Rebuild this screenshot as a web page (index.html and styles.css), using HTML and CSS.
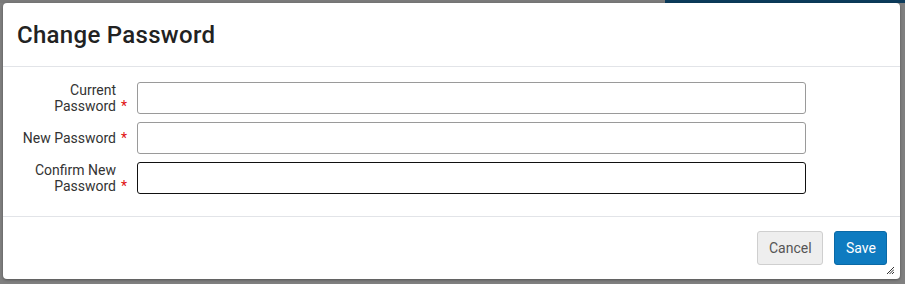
FILE: index.html
```html
<!DOCTYPE html>
<html>
<head>
<meta charset="utf-8">
<link rel="stylesheet" href="styles.css">
</head>
<body>
<div class="pagebar">
  <div class="pagebar-left"></div>
  <div class="pagebar-right"></div>
</div>
<div class="modal">
  <div class="modal-header">
    <h1 class="modal-title">Change Password</h1>
  </div>
  <div class="modal-body">
    <div class="form-row">
      <label class="form-label"><span class="label-text">Current Password</span><span class="req">*</span></label>
      <input class="form-input" type="password">
    </div>
    <div class="form-row">
      <label class="form-label"><span class="label-text">New Password</span><span class="req">*</span></label>
      <input class="form-input" type="password">
    </div>
    <div class="form-row">
      <label class="form-label"><span class="label-text">Confirm New Password</span><span class="req">*</span></label>
      <input class="form-input focused" type="password">
    </div>
  </div>
  <div class="modal-footer">
    <button class="btn btn-cancel">Cancel</button>
    <button class="btn btn-save">Save</button>
    <svg class="resize" width="7" height="7" viewBox="0 0 7 7"><path d="M0 7L7 0M2.5 7L7 2.5M5 7L7 5" stroke="#333" stroke-width="1"/></svg>
  </div>
</div>
</body>
</html>
```
FILE: styles.css
```css
html, body {
  margin: 0;
  padding: 0;
}
body {
  background: #808080;
  font-family: Roboto, "Liberation Sans", Arial, sans-serif;
  width: 905px;
  height: 284px;
  overflow: hidden;
}
.pagebar {
  display: flex;
  height: 3px;
}
.pagebar-left {
  width: 665px;
  background: #7a7a7a;
}
.pagebar-right {
  flex: 1;
  background: #0c3b5b;
}
.modal {
  margin-left: 3px;
  width: 897px;
  height: 276px;
  background: #fff;
  border-radius: 4px;
  box-shadow: 0 1px 3px rgba(0,0,0,0.35);
  display: flex;
  flex-direction: column;
  position: relative;
}
.modal-header {
  height: 64px;
  border-bottom: 1px solid #e2e4e8;
  display: flex;
  align-items: center;
  padding: 0 14px;
  box-sizing: border-box;
}
.modal-title {
  margin: 0;
  font-size: 24px;
  font-weight: 500;
  color: #222;
  letter-spacing: 0.3px;
}
.modal-body {
  padding: 15px 0 22px 0;
  display: flex;
  flex-direction: column;
  gap: 8px;
  border-bottom: 1px solid #e2e4e8;
}
.form-row {
  display: flex;
  align-items: center;
}
.form-label {
  width: 124px;
  box-sizing: border-box;
  padding-left: 14px;
  display: flex;
  justify-content: flex-end;
  align-items: flex-end;
  font-size: 14px;
  line-height: 16px;
  color: #333;
}
.label-text {
  text-align: right;
  max-width: 99px;
}
.req {
  color: #e01010;
  width: 11px;
  text-align: right;
  flex: none;
}
.form-input {
  margin-left: 10px;
  width: 669px;
  height: 32px;
  box-sizing: border-box;
  border: 1px solid #9a9a9a;
  border-radius: 3px;
  background: #fff;
  outline: none;
  padding: 0 8px;
  font-size: 14px;
}
.form-input.focused {
  border-color: #111;
}
.modal-footer {
  flex: 1;
  display: flex;
  justify-content: flex-end;
  align-items: center;
  gap: 11px;
  padding: 0 13px 0 0;
  position: relative;
}
.btn {
  height: 34px;
  font-family: Roboto, "Liberation Sans", Arial, sans-serif;
  font-size: 14px;
  border-radius: 3px;
  padding: 0 11px;
  box-sizing: border-box;
  cursor: pointer;
}
.btn-cancel {
  background: #eeeeee;
  border: 1px solid #cfcfcf;
  color: #555;
  width: 66px;
}
.btn-save {
  background: #0e7bc0;
  border: 1px solid #0a69a6;
  color: #fff;
  width: 53px;
}
.resize {
  position: absolute;
  right: 6px;
  bottom: 5px;
}
```
